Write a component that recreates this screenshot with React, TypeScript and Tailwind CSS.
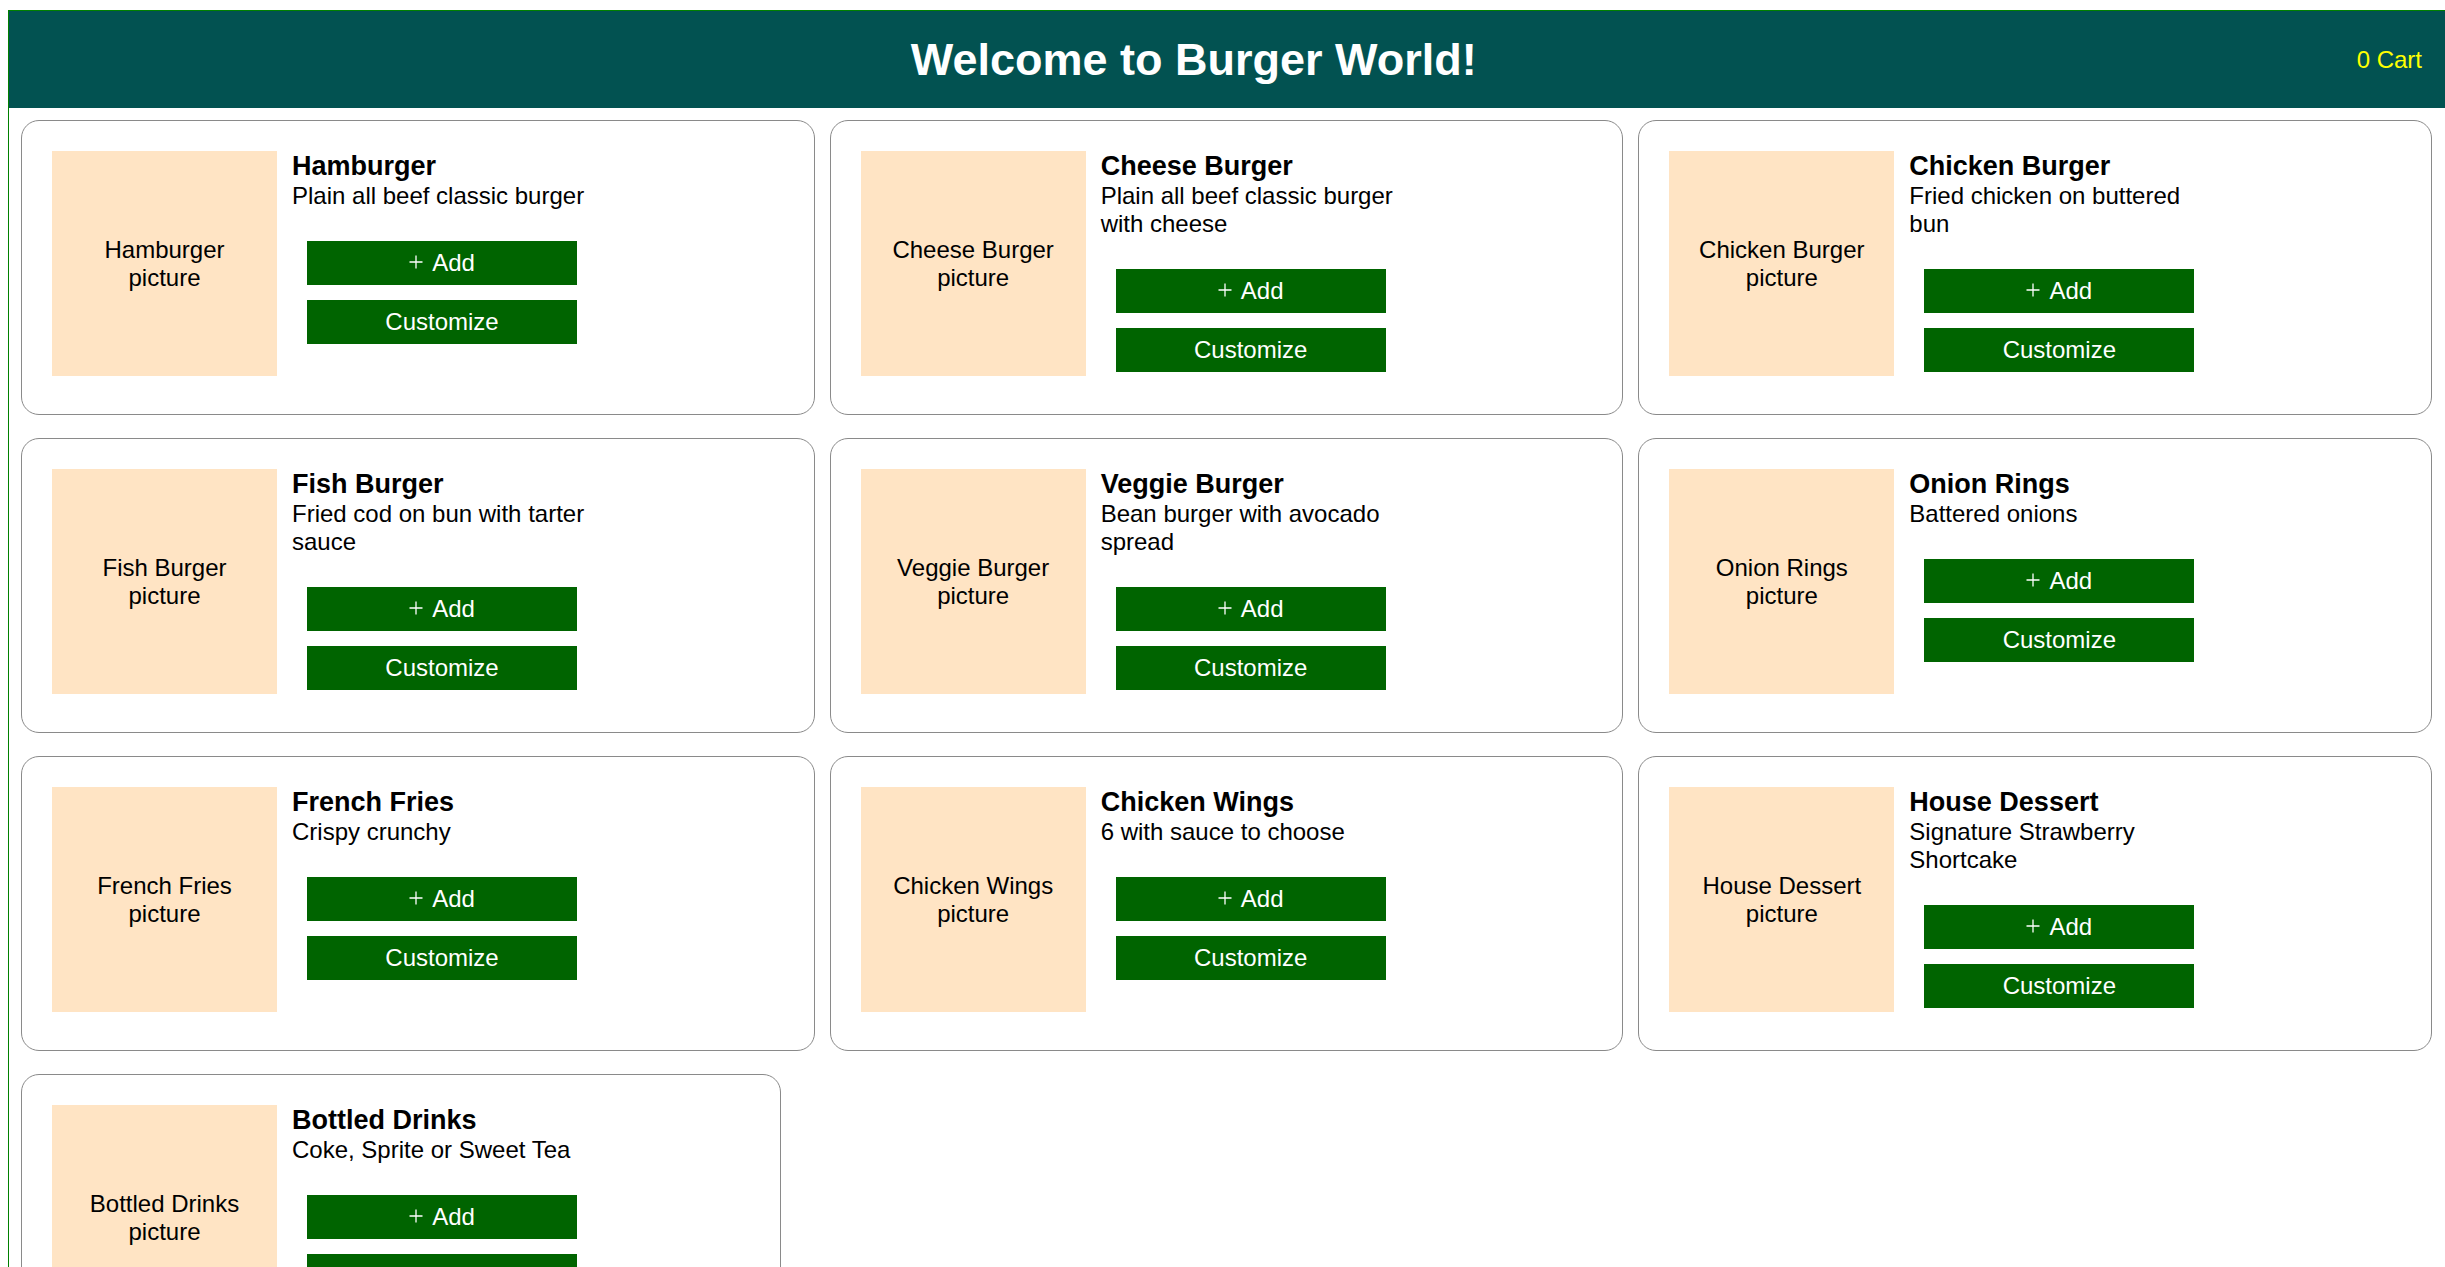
const MENU = [
  { name: 'Hamburger', desc: 'Plain all beef classic burger' },
  { name: 'Cheese Burger', desc: 'Plain all beef classic burger with cheese' },
  { name: 'Chicken Burger', desc: 'Fried chicken on buttered bun' },
  { name: 'Fish Burger', desc: 'Fried cod on bun with tarter sauce' },
  { name: 'Veggie Burger', desc: 'Bean burger with avocado spread' },
  { name: 'Onion Rings', desc: 'Battered onions' },
  { name: 'French Fries', desc: 'Crispy crunchy' },
  { name: 'Chicken Wings', desc: '6 with sauce to choose' },
  { name: 'House Dessert', desc: 'Signature Strawberry Shortcake' },
  { name: 'Bottled Drinks', desc: 'Coke, Sprite or Sweet Tea' },
];

function PlusIcon() {
  return (
    <svg width="14" height="14" viewBox="0 0 14 14" className="mb-[3px]">
      <path d="M7 0.5V13.5M0.5 7H13.5" stroke="white" strokeWidth="1.3" fill="none" />
    </svg>
  );
}

function MenuCard({ name, desc, last }: { name: string; desc: string; last?: boolean }) {
  return (
    <div
      className={`flex gap-[15px] rounded-[18px] border border-[#8a8a8a] bg-white pt-[30px] pb-[38px] pl-[30px] ${
        last ? 'w-[760px]' : ''
      }`}
    >
      {/* placeholder picture */}
      <div className="flex h-[225px] w-[225px] shrink-0 items-center justify-center bg-[#ffe4c4] px-2 text-center text-[24px] text-black">
        {name}
        <br />
        picture
      </div>

      <div className="w-[300px] shrink-0">
        <h2 className="text-[27px] font-bold text-black">{name}</h2>
        <p className="text-[24px] text-black">{desc}</p>
        <div className="mx-[15px] mt-[31px] flex flex-col gap-[15px]">
          <button className="flex h-[44px] items-center justify-center gap-[9px] bg-[#006400] text-[24px] text-white">
            <PlusIcon />
            <span>Add</span>
          </button>
          <button className="flex h-[44px] items-center justify-center bg-[#006400] text-[24px] text-white">
            Customize
          </button>
        </div>
      </div>
    </div>
  );
}

export default function App() {
  const cartCount = 0;

  return (
    <div
      className="min-h-screen bg-white leading-[normal]"
      style={{ fontFamily: '"Liberation Sans", Arial, sans-serif' }}
    >
      <div className="ml-[8px] mt-[10px] border-l border-t border-[#008000] pb-[40px]">
        <header className="flex h-[97px] items-center bg-[#025251] pl-[22px] pr-[23px]">
          <h1 className="flex-1 text-center text-[45px] font-bold text-white">Welcome to Burger World!</h1>
          <span className="text-[24px] text-[#ffff00]">{cartCount} Cart</span>
        </header>

        <main className="grid grid-cols-3 gap-x-[15px] gap-y-[23px] pl-[12px] pr-[13px] pt-[12px]">
          {MENU.map((item, i) => (
            <MenuCard key={item.name} name={item.name} desc={item.desc} last={i === MENU.length - 1} />
          ))}
        </main>
      </div>
    </div>
  );
}
